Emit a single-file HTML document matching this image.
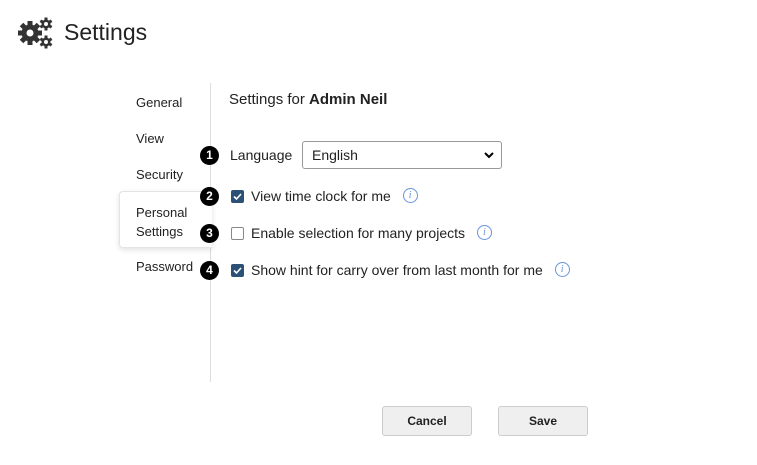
<!DOCTYPE html>
<html><head><style>
body{margin:0;width:757px;height:465px;background:#fff;font-family:"Liberation Sans",Arial,sans-serif;color:#222;position:relative;overflow:hidden}
.a{position:absolute}
.nav{font-size:13px;color:#222;left:136px}
.b{width:19px;height:19px;border-radius:50%;background:#000;color:#fff;font-weight:bold;font-size:12px;text-align:center;line-height:19px;left:200px}
.cb{width:13px;height:13px;border-radius:2px;left:231px}
.on{background:#2d5077}
.off{border:1px solid #888;width:11px;height:11px;background:#fff}
.t{font-size:14px;left:251px;white-space:nowrap;line-height:16px}
.i{display:inline-block;vertical-align:top;margin-top:0px;margin-left:8px;width:13px;height:13px;border:1px solid #6a93d8;border-radius:50%;color:#6a93d8;font-size:10px;text-align:center;line-height:13px;font-style:italic;font-family:"Liberation Serif",serif}
.btn{width:88px;height:28px;border:1px solid #ccc;border-radius:3px;background:#efefef;font-weight:bold;font-size:12px;text-align:center;line-height:28px;top:406px}
</style></head><body>
<svg class="a" style="left:18px;top:17px" width="36" height="32" viewBox="0 0 36 32">
<g fill="#333">
<g transform="translate(12,16)"><circle r="8.5"/><g><rect x="-2.5" y="-12" width="5" height="24"/><rect x="-2.5" y="-12" width="5" height="24" transform="rotate(45)"/><rect x="-2.5" y="-12" width="5" height="24" transform="rotate(90)"/><rect x="-2.5" y="-12" width="5" height="24" transform="rotate(135)"/></g><circle r="3.5" fill="#fff"/></g>
<g transform="translate(28,7)"><circle r="4.5"/><rect x="-1.5" y="-6.5" width="3" height="13"/><rect x="-1.5" y="-6.5" width="3" height="13" transform="rotate(60)"/><rect x="-1.5" y="-6.5" width="3" height="13" transform="rotate(120)"/><circle r="2" fill="#fff"/></g>
<g transform="translate(28,25)"><circle r="4.5"/><rect x="-1.5" y="-6.5" width="3" height="13"/><rect x="-1.5" y="-6.5" width="3" height="13" transform="rotate(60)"/><rect x="-1.5" y="-6.5" width="3" height="13" transform="rotate(120)"/><circle r="2" fill="#fff"/></g>
</g></svg>
<div class="a" style="left:64px;top:19px;font-size:23px;color:#222">Settings</div>

<div class="a" style="left:210px;top:83px;width:1px;height:299px;background:#ddd"></div>
<div class="a" style="left:119px;top:191px;width:92px;height:55px;background:#fff;border:1px solid #e4e4e4;border-right:none;border-radius:4px 0 0 4px;box-shadow:0 2px 6px rgba(0,0,0,.12)"></div>
<div class="a nav" style="top:95px">General</div>
<div class="a nav" style="top:131px">View</div>
<div class="a nav" style="top:167px">Security</div>
<div class="a nav" style="top:203px;line-height:19px">Personal<br>Settings</div>
<div class="a nav" style="top:259px">Password</div>

<div class="a" style="left:229px;top:91px;font-size:15px;white-space:nowrap">Settings for <b>Admin Neil</b></div>

<div class="a b" style="top:146px">1</div>
<div class="a" style="left:230px;top:147px;font-size:14px">Language</div>
<div class="a" style="left:302px;top:141px;width:198px;height:26px;border:1px solid #999;border-radius:3px;font-size:14px;line-height:26px;box-sizing:content-box"><span style="margin-left:9px">English</span>
<svg class="a" style="right:7px;top:9px" width="10" height="8"><path d="M1 2 L5 6 L9 2" stroke="#000" stroke-width="2" fill="none"/></svg></div>

<div class="a b" style="top:187px">2</div>
<div class="a cb on" style="top:190px"><svg width="13" height="13"><path d="M3 6.5 L5.5 9 L10 4" stroke="#fff" stroke-width="1.6" fill="none"/></svg></div>
<div class="a t" style="top:188px">View time clock for me <span class="i">i</span></div>

<div class="a b" style="top:224px">3</div>
<div class="a cb off" style="top:227px"></div>
<div class="a t" style="top:225px">Enable selection for many projects <span class="i">i</span></div>

<div class="a b" style="top:261px">4</div>
<div class="a cb on" style="top:264px"><svg width="13" height="13"><path d="M3 6.5 L5.5 9 L10 4" stroke="#fff" stroke-width="1.6" fill="none"/></svg></div>
<div class="a t" style="top:262px">Show hint for carry over from last month for me <span class="i">i</span></div>

<div class="a btn" style="left:382px">Cancel</div>
<div class="a btn" style="left:498px">Save</div>
</body></html>
